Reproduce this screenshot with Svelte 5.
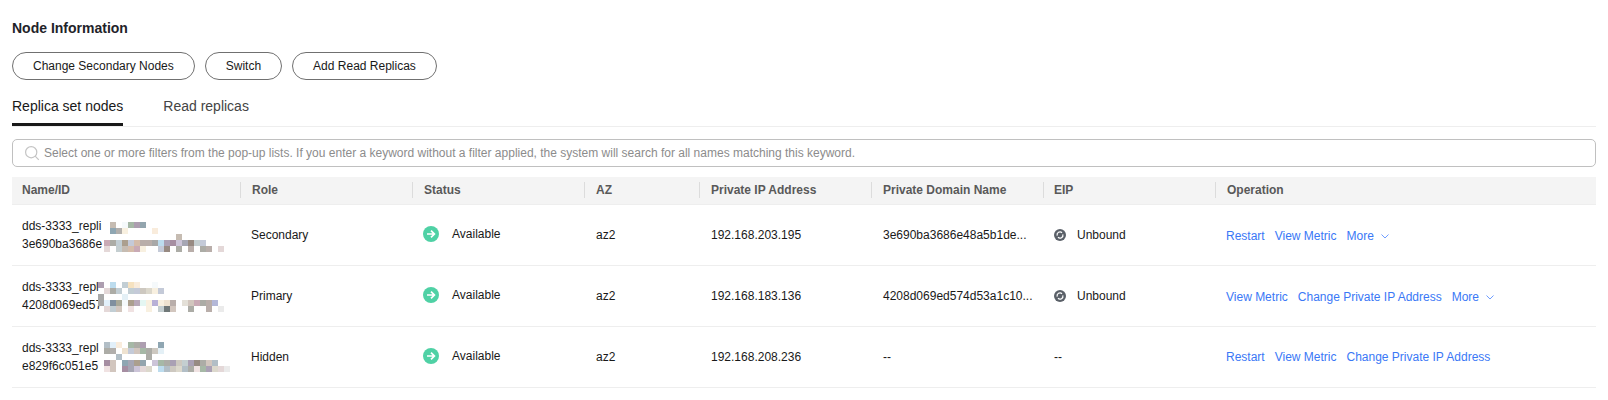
<script>
	const C = {
		a: '#c6bcb2', b: '#f5f9fb', c: '#a6b8a6', d: '#ad9eb0', e: '#93a5ae', f: '#8fa6b2', g: '#b2afac', h: '#f8f0e0', i: '#f9ecdc',
		j: '#c9aab5', k: '#acaca6', l: '#c2ced4', m: '#ab9f8e', n: '#c4cad8', o: '#d4bcaa', p: '#b9aeaa', q: '#e4d8d8', r: '#a8a8a8',
		s: '#bcdcee', t: '#aaa0b4', u: '#a68ea2', v: '#ccc4d8', w: '#a09cb4', x: '#a6a6b4', y: '#978a82', z: '#c4ced0',
		A: '#cdc8c0', B: '#dcd8cc', C: '#e4f0f6', D: '#e2f0fa', E: '#7f8f9f', F: '#a8a898', G: '#b8a8b8', H: '#f6e2c0', I: '#e4f6f2',
		J: '#b8b0d6', K: '#eee2d0', L: '#e4e0d8', M: '#d2c6be', N: '#b4b8d8', O: '#f0e2e2', P: '#707878', Q: '#ebebeb', R: '#b2bec6'
	};

	// mosaic over the redacted ids: one string per 6px line, '.' left blank
	function cells(lines) {
		const out = [];
		lines.forEach((line, y) => {
			[...line].forEach((ch, x) => {
				if (ch !== '.') out.push({ x: 86 + x * 6, y: y * 6, color: C[ch] });
			});
		});
		return out;
	}

	const rows = [
		{
			name: 'dds-3333_repli',
			id: '3e690ba3686e',
			role: 'Secondary',
			ip: '192.168.203.195',
			domain: '3e690ba3686e48a5b1de...',
			eip: true,
			ops: ['Restart', 'View Metric'],
			more: true,
			top: 17,
			blur: cells([
				'..a.bcde',
				'..fgh....i',
				'.............a',
				'.jklmnopprstuvxyzn',
				'.q.zaojh..ny.k.p.kp.q'
			])
		},
		{
			name: 'dds-3333_repl',
			id: '4208d069ed57',
			role: 'Primary',
			ip: '192.168.183.136',
			domain: '4208d069ed574d53a1c10...',
			eip: true,
			ops: ['View Metric', 'Change Private IP Address'],
			more: true,
			top: 16,
			blur: cells([
				'd.s.lHi..b',
				'.qkl.lnABhn',
				'r...C',
				'rDEFbmGIhJhKp.LMjkpN',
				'.qlM.O..h.zPM..k..p.Q'
			])
		},
		{
			name: 'dds-3333_repl',
			id: 'e829f6c051e5',
			role: 'Hidden',
			ip: '192.168.208.236',
			domain: '--',
			eip: false,
			ops: ['Restart', 'View Metric', 'Change Private IP Address'],
			more: false,
			top: 15,
			blur: cells([
				'.RDi.ckd..f',
				'.kg.KnMckAC',
				'...R....k',
				'.uM.fxme.vcktAztykMR',
				'.OM.uxvqB.sRABRkOctBqQ'
			])
		}
	];
</script>

<main>
	<h2>Node Information</h2>

	<div class="actions">
		<button>Change Secondary Nodes</button>
		<button>Switch</button>
		<button>Add Read Replicas</button>
	</div>

	<div class="tabs">
		<span class="tab active">Replica set nodes</span>
		<span class="tab">Read replicas</span>
	</div>

	<div class="search">
		<svg width="16" height="16" viewBox="0 0 16 16" fill="none" stroke="#c4c4c4" stroke-width="1.2">
			<circle cx="7.2" cy="7.2" r="5.6" />
			<path d="M11.2 11.2l3.6 3.6" />
		</svg>
		<span>Select one or more filters from the pop-up lists. If you enter a keyword without a filter applied, the system will search for all names matching this keyword.</span>
	</div>

	<table>
		<colgroup>
			<col class="w229" />
			<col class="w172" />
			<col class="w172" />
			<col class="w115" />
			<col class="w172" />
			<col class="w172" />
			<col class="w172" />
			<col />
		</colgroup>
		<thead>
			<tr>
				<th>Name/ID</th>
				<th>Role</th>
				<th>Status</th>
				<th>AZ</th>
				<th>Private IP Address</th>
				<th>Private Domain Name</th>
				<th>EIP</th>
				<th>Operation</th>
			</tr>
		</thead>
		<tbody>
			{#each rows as row}
				<tr>
					<td class="name">
						<div>{row.name}</div>
						<div>{row.id}</div>
						{#each row.blur as b}
							<i class="px" style="left:{b.x}px;top:{b.y + row.top}px;background:{b.color}"></i>
						{/each}
					</td>
					<td>{row.role}</td>
					<td>
						<span class="status">
							<svg width="16" height="16" viewBox="0 0 16 16">
								<circle cx="8" cy="8" r="8" fill="#4fd1a5" />
								<path d="M4 8h7.4M8 4.6L11.4 8 8 11.4" fill="none" stroke="#fff" stroke-width="1.7" />
							</svg>
							Available
						</span>
					</td>
					<td>az2</td>
					<td>{row.ip}</td>
					<td>{row.domain}</td>
					<td>
						{#if row.eip}
							<span class="eip">
								<svg width="12" height="12" viewBox="0 0 12 12">
									<circle cx="6" cy="6" r="6" fill="#5a6068" />
									<path d="M3.2 6.6A2.9 2.9 0 0 1 8 3.7M8.8 5.4A2.9 2.9 0 0 1 4 8.3" fill="none" stroke="#fff" stroke-width="1.2" />
								</svg>
								Unbound
							</span>
						{:else}
							--
						{/if}
					</td>
					<td>
						<span class="ops" class:has-more={row.more}>
							{#each row.ops as op}
								<a href="#top">{op}</a>
							{/each}
							{#if row.more}
								<a href="#top" class="more">
									More
									<svg width="10" height="10" viewBox="0 0 10 10" fill="none" stroke="#6f9dff" stroke-width="1">
										<path d="M1.5 3.5L5 7l3.5-3.5" />
									</svg>
								</a>
							{/if}
						</span>
					</td>
				</tr>
			{/each}
		</tbody>
	</table>
</main>

<style>
	:global(body) {
		background: #fff;
	}
	main {
		height: 400px;
		box-sizing: border-box;
		padding: 20px 12px 0;
		font-family: 'Liberation Sans', Arial, sans-serif;
		font-size: 12px;
		color: #191919;
		overflow: hidden;
	}
	h2 {
		margin: 0;
		font-size: 14px;
		line-height: 16px;
		font-weight: 700;
		color: #1f2329;
	}
	.actions {
		display: flex;
		gap: 10px;
		margin-top: 16px;
	}
	button {
		height: 28px;
		padding: 0 20px;
		border: 1px solid #707070;
		border-radius: 14px;
		background: #fff;
		font: inherit;
		color: #191919;
	}
	.tabs {
		display: flex;
		gap: 40px;
		margin-top: 14px;
		border-bottom: 1px solid #eeeeee;
	}
	.tab {
		height: 30px;
		padding-top: 2px;
		font-size: 14px;
		line-height: 20px;
		color: #444;
	}
	.tab.active {
		color: #191919;
		box-shadow: inset 0 -3px 0 #191919;
	}
	.search {
		display: flex;
		align-items: center;
		gap: 4px;
		box-sizing: border-box;
		height: 28px;
		margin-top: 12px;
		padding-left: 11px;
		border: 1px solid #c0c0c0;
		border-radius: 5px;
		color: #8c8c8c;
	}
	table {
		width: 1584px;
		margin-top: 10px;
		border-collapse: collapse;
		table-layout: fixed;
	}
	.w229 {
		width: 229px;
	}
	.w172 {
		width: 172px;
	}
	.w115 {
		width: 115px;
	}
	th {
		position: relative;
		height: 25px;
		padding: 0 0 2px 11px;
		background: #f4f4f4;
		border-bottom: 1px solid #eeeeee;
		text-align: left;
		font-weight: 700;
		color: #595959;
	}
	th:first-child,
	td:first-child,
	th:nth-child(7) {
		padding-left: 10px;
	}
	th + th::before {
		content: '';
		position: absolute;
		left: -1px;
		top: 5px;
		bottom: 6px;
		width: 1px;
		background: #dcdcdc;
	}
	td {
		height: 60px;
		padding: 0 0 0 11px;
		border-bottom: 1px solid #eeeeee;
		color: #191919;
		white-space: nowrap;
	}
	td:nth-child(2),
	td:nth-child(3),
	td:nth-child(7),
	td:nth-child(8) {
		padding-left: 10px;
	}
	td.name {
		position: relative;
		line-height: 18px;
	}
	.px {
		position: absolute;
		width: 6px;
		height: 6px;
	}
	.status,
	.eip,
	.ops {
		display: inline-flex;
		align-items: center;
	}
	.status {
		gap: 13px;
	}
	.eip {
		gap: 11px;
		padding-top: 2px;
	}
	.ops {
		gap: 10px;
	}
	.ops.has-more {
		padding-top: 2px;
	}
	a {
		color: #3a78f6;
		text-decoration: none;
	}
	.more {
		display: inline-flex;
		align-items: center;
		gap: 6px;
	}
</style>
